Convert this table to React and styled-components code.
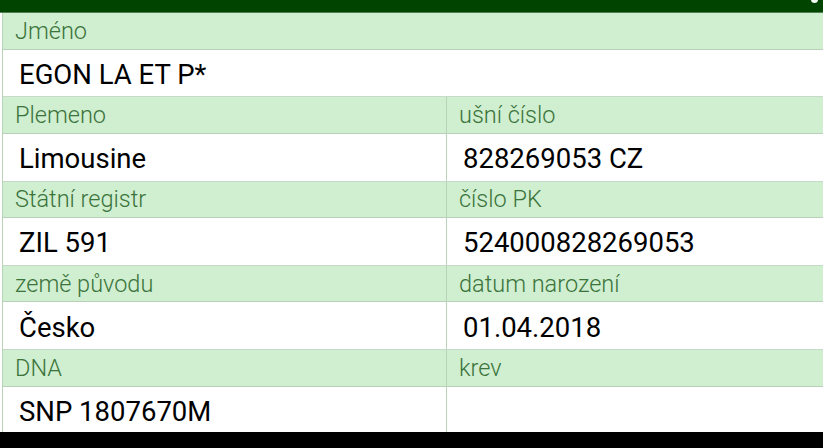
import React from "react";
import styled, { createGlobalStyle } from "styled-components";

const Global = createGlobalStyle`
  html, body { margin: 0; padding: 0; background: #ffffff; }
  body { font-family: Roboto, "Noto Sans", sans-serif; }
`;

const Screen = styled.div`
  width: 823px;
  height: 448px;
  display: flex;
  flex-direction: column;
  overflow: hidden;
  background: #ffffff;
`;

const TopBar = styled.div`
  position: relative;
  height: 12px;
  flex: 0 0 12px;
  background: #004400;
  border-bottom: 1px solid #4f7f4f;
`;

const CornerMark = styled.div`
  position: absolute;
  right: 5px;
  top: -4px;
  width: 7px;
  height: 7px;
  border-radius: 50%;
  background: #f4f8f4;
`;

const Content = styled.div`
  flex: 1;
  overflow: hidden;
  padding-left: 2px;
`;

const Table = styled.div`
  display: grid;
  grid-template-columns: 444px 1fr;
  border-left: 1px solid #b9d3b9;
`;

const Label = styled.div`
  grid-column: ${(p) => (p.$wide ? "1 / span 2" : "auto")};
  height: 36.5px;
  box-sizing: border-box;
  background: #d0eed0;
  border-bottom: 1px solid #b7d0b7;
  border-right: ${(p) => (p.$divider ? "1px solid #b9d3b9" : "none")};
  display: flex;
  align-items: center;
  padding-left: 12px;
  font-family: Roboto, "Noto Sans", sans-serif;
  font-weight: 300;
  font-size: 23.5px;
  color: #3b743b;
  white-space: nowrap;
`;

const Value = styled.div`
  grid-column: ${(p) => (p.$wide ? "1 / span 2" : "auto")};
  height: 47.75px;
  box-sizing: border-box;
  background: #ffffff;
  border-bottom: 1px solid #c7d9c7;
  border-right: ${(p) => (p.$divider ? "1px solid #b9d3b9" : "none")};
  display: flex;
  align-items: center;
  padding-left: 16px;
  padding-top: 3px;
  font-family: Roboto, "Noto Sans", sans-serif;
  font-weight: 400;
  font-size: 27.5px;
  color: #000000;
  white-space: nowrap;
`;

const NavBar = styled.div`
  height: 16px;
  flex: 0 0 16px;
  background: #000000;
`;

const rows = [
  [["Plemeno", "Limousine"], ["ušní číslo", "828269053 CZ"]],
  [["Státní registr", "ZIL 591"], ["číslo PK", "524000828269053"]],
  [["země původu", "Česko"], ["datum narození", "01.04.2018"]],
  [["DNA", "SNP 1807670M"], ["krev", ""]],
];

export default function App() {
  return (
    <>
      <Global />
      <Screen>
        <TopBar>
          <CornerMark />
        </TopBar>
        <Content>
          <Table>
            <Label $wide>Jméno</Label>
            <Value $wide>EGON LA ET P*</Value>
            {rows.map(([a, b]) => (
              <React.Fragment key={a[0]}>
                <Label $divider>{a[0]}</Label>
                <Label>{b[0]}</Label>
                <Value $divider>{a[1]}</Value>
                <Value>{b[1]}</Value>
              </React.Fragment>
            ))}
          </Table>
        </Content>
        <NavBar />
      </Screen>
    </>
  );
}
